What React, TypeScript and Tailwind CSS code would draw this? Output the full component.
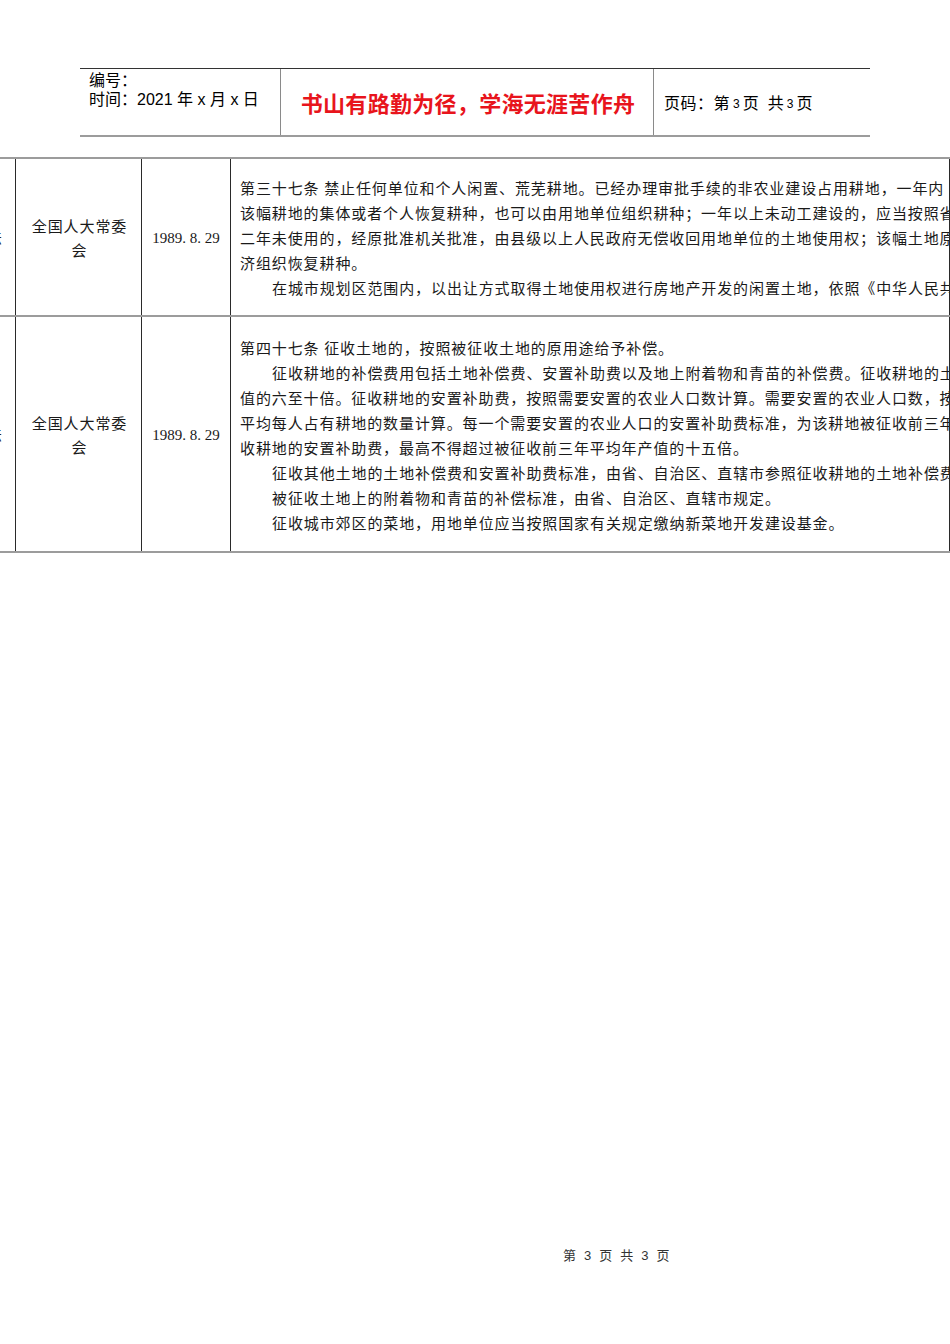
import React from "react";

const body = { fontFamily: '"Liberation Serif", "Noto Sans CJK SC", serif' };
const head = { fontFamily: '"Liberation Sans", "Noto Sans CJK SC", sans-serif' };

const row1 = [
  { indent: false, t: "第三十七条 禁止任何单位和个人闲置、荒芜耕地。已经办理审批手续的非农业建设占用耕地，一年内" },
  { indent: false, t: "该幅耕地的集体或者个人恢复耕种，也可以由用地单位组织耕种；一年以上未动工建设的，应当按照省、自治区、直辖市的规定缴纳闲置费；连续" },
  { indent: false, t: "二年未使用的，经原批准机关批准，由县级以上人民政府无偿收回用地单位的土地使用权；该幅土地原为农民集体所有的，应当交由原农村集体经" },
  { indent: false, t: "济组织恢复耕种。" },
  { indent: true, t: "在城市规划区范围内，以出让方式取得土地使用权进行房地产开发的闲置土地，依照《中华人民共和国城市房地产管理法》的有关规定办理。" },
];

const row2 = [
  { indent: false, t: "第四十七条 征收土地的，按照被征收土地的原用途给予补偿。" },
  { indent: true, t: "征收耕地的补偿费用包括土地补偿费、安置补助费以及地上附着物和青苗的补偿费。征收耕地的土地补偿费，为该耕地被征收前三年平均年产" },
  { indent: false, t: "值的六至十倍。征收耕地的安置补助费，按照需要安置的农业人口数计算。需要安置的农业人口数，按照被征收的耕地数量除以征地前被征收单位" },
  { indent: false, t: "平均每人占有耕地的数量计算。每一个需要安置的农业人口的安置补助费标准，为该耕地被征收前三年平均年产值的四至六倍。但是，每公顷被征" },
  { indent: false, t: "收耕地的安置补助费，最高不得超过被征收前三年平均年产值的十五倍。" },
  { indent: true, t: "征收其他土地的土地补偿费和安置补助费标准，由省、自治区、直辖市参照征收耕地的土地补偿费和安置补助费的标准规定。" },
  { indent: true, t: "被征收土地上的附着物和青苗的补偿标准，由省、自治区、直辖市规定。" },
  { indent: true, t: "征收城市郊区的菜地，用地单位应当按照国家有关规定缴纳新菜地开发建设基金。" },
];

function Lines({ lines }: { lines: { indent: boolean; t: string }[] }) {
  return (
    <>
      {lines.map((l, i) => (
        <div
          key={i}
          className={`whitespace-nowrap leading-[25px] ${l.indent ? "pl-[32px]" : ""}`}
        >
          {l.t}
        </div>
      ))}
    </>
  );
}

function Row({
  h,
  pt,
  lines,
}: {
  h: string;
  pt: string;
  lines: { indent: boolean; t: string }[];
}) {
  return (
    <div className={`flex border-b-2 border-[#9c9c9c] ${h}`}>
      <div className="w-[76px] shrink-0 border-r border-[#2a2a2a] flex items-center justify-end pr-[12px] pt-[3px] overflow-hidden">
        法
      </div>
      <div className="w-[126px] shrink-0 border-r border-[#2a2a2a] flex items-center justify-center text-center leading-[24px] pl-[2px] pt-[3px]">
        全国人大常委
        <br />
        会
      </div>
      <div className="w-[89px] shrink-0 border-r border-[#2a2a2a] flex items-center justify-center pt-[2px]">
        <span className="tracking-normal">1989. 8. 29</span>
      </div>
      <div className={`w-[719px] shrink-0 border-r border-[#2a2a2a] overflow-hidden pl-[9px] ${pt}`}>
        <Lines lines={lines} />
      </div>
    </div>
  );
}

export default function App() {
  return (
    <div className="relative w-[950px] h-[1344px] bg-white overflow-hidden text-black">
      {/* header */}
      <div
        className="mt-[68px] ml-[80px] w-[790px] h-[69px] flex border-t border-[#333] border-b-2 border-b-[#9c9c9c]"
        style={head}
      >
        <div className="w-[201px] shrink-0 border-r border-[#8a8a8a] pl-[9px] pt-[2px] text-[16px] leading-[19px]">
          <div>编号：</div>
          <div>时间：2021 年 x 月 x 日</div>
        </div>
        <div className="w-[373px] shrink-0 border-r border-[#8a8a8a] flex items-center justify-center pt-[4px] pl-[2px]">
          <span className="text-[22px] font-bold text-[#e8141c] tracking-[0.3px]">
            书山有路勤为径，学海无涯苦作舟
          </span>
        </div>
        <div className="flex-1 flex items-center pl-[10px] pt-[3px] text-[16px]">
          <span className="tracking-[0.5px]">页码：第</span>
          <span className="text-[12px] px-[3px]">3</span>
          <span>页</span>
          <span className="ml-[9px]">共</span>
          <span className="text-[12px] px-[3px]">3</span>
          <span>页</span>
        </div>
      </div>

      {/* table */}
      <div
        className="mt-[20px] -ml-[60px] w-[1010px] border-t-2 border-[#9c9c9c] text-[15px] tracking-[0.9px] text-[#1a1a1a]"
        style={body}
      >
        <Row h="h-[158px]" pt="pt-[18px]" lines={row1} />
        <Row h="h-[236px]" pt="pt-[20px]" lines={row2} />
      </div>

      {/* footer */}
      <div
        className="mt-[695px] ml-[563px] flex gap-[8px] text-[13px] leading-[16px] text-[#333]"
        style={head}
      >
        <span>第</span>
        <span>3</span>
        <span>页</span>
        <span>共</span>
        <span>3</span>
        <span>页</span>
      </div>
    </div>
  );
}
